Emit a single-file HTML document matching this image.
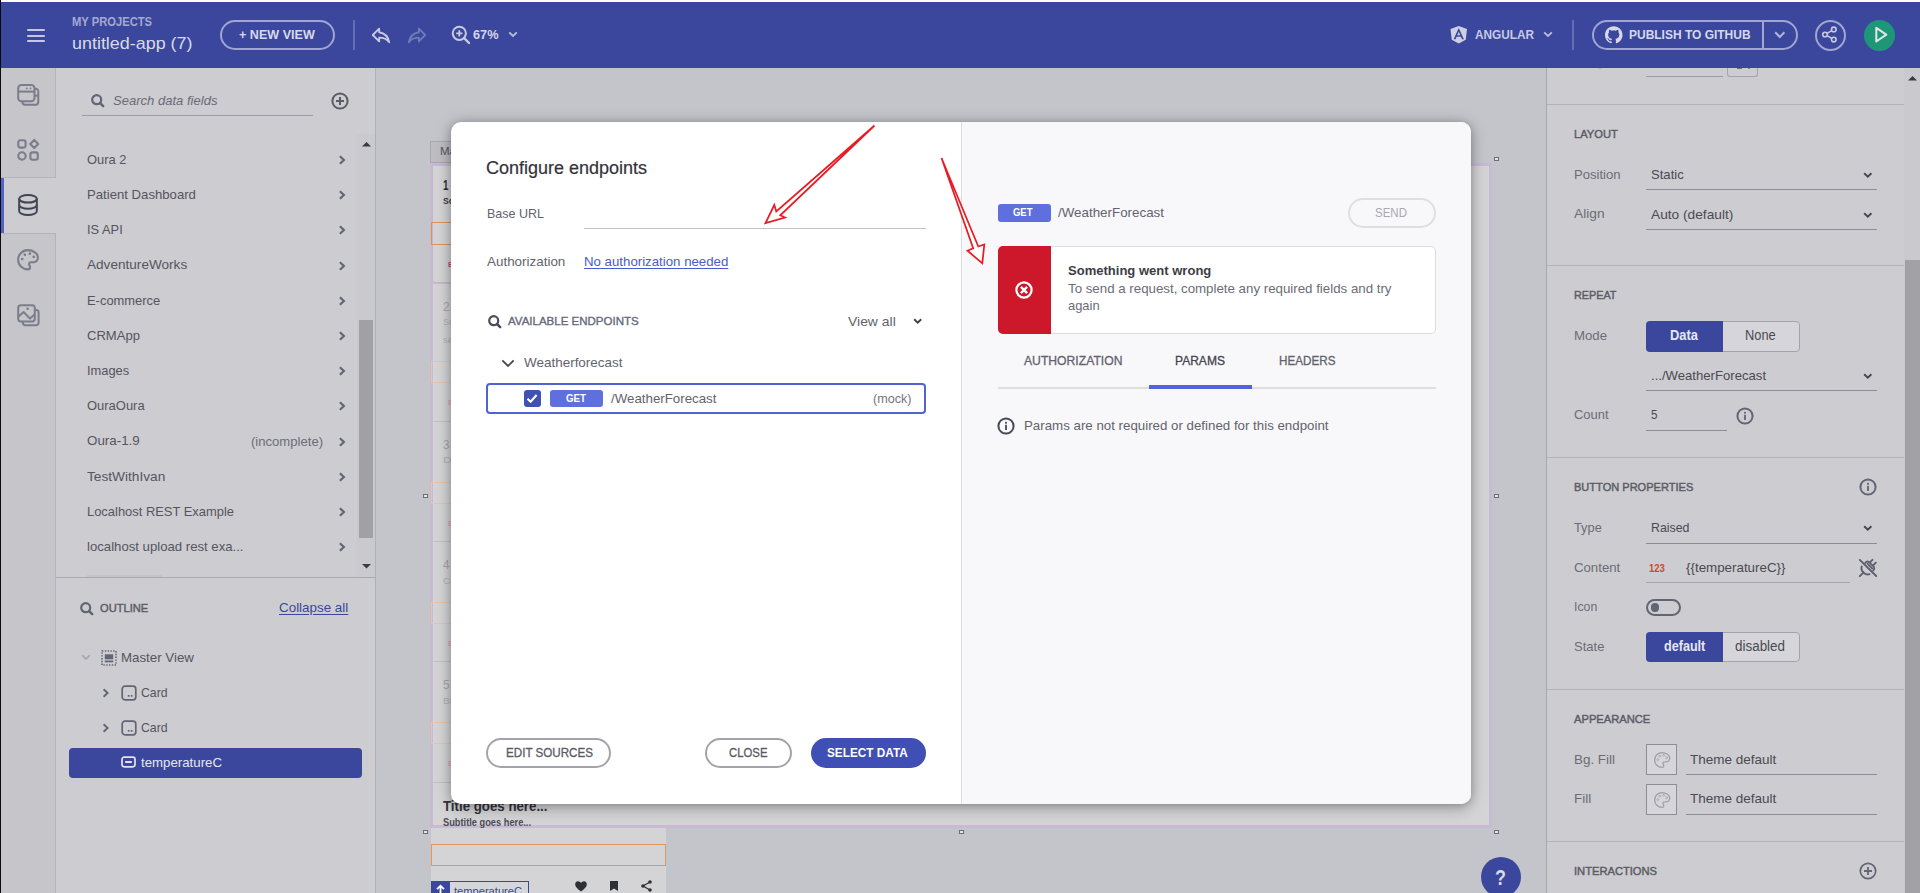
<!DOCTYPE html>
<html lang="en"><head><meta charset="utf-8"><title>App Builder - Configure endpoints</title>
<style>
html,body{margin:0;padding:0}
body{width:1920px;height:893px;overflow:hidden;position:relative;background:#c4c5cb;font-family:"Liberation Sans",sans-serif}
div,span.t,svg{position:absolute;box-sizing:border-box}
span.t{white-space:nowrap;transform-origin:0 50%;display:block}
svg{overflow:visible}
</style></head><body>
<!-- canvas -->
<div style="left:376px;top:68px;width:1171px;height:825px;background:#c4c5cb"></div>
<div style="left:431px;top:164px;width:1060px;height:662px;background:#d4d4d7"></div>
<div style="left:665px;top:166px;width:1px;height:659px;background:#dadadd"></div>
<div style="left:431px;top:163px;width:235px;height:730px;background:#d4d4d7"></div>
<div style="left:430px;top:163px;width:1062px;height:665px;border:3px solid #c9bad3"></div>
<div style="left:430px;top:141px;width:84px;height:22px;background:#bdbdc2;border:1px solid #a7a7ae"></div>
<span class="t" style="left:439.80px;top:146.49px;font-size:11px;line-height:11px;color:#55555e;transform:scaleX(1.0402);">Master View</span>
<div style="left:432px;top:164px;width:232px;height:119px;border:1px solid #c3b6cd;border-radius:3px"></div>
<span class="t" style="left:443.20px;top:177.65px;font-size:14px;line-height:14px;color:#2f2f36;font-weight:700;transform:scaleX(0.6968);">1</span>
<span class="t" style="left:442.60px;top:197.38px;font-size:9px;line-height:9px;color:#3a3a42;font-weight:700;transform:scaleX(0.9517);">Scattered clouds</span>
<div style="left:431px;top:222px;width:234px;height:23px;border:1px solid #dc9456"></div>
<span class="t" style="left:447.60px;top:261.23px;font-size:8px;line-height:8px;color:#d8486c;font-weight:700;transform:scaleX(0.8696);">B</span>
<div style="left:432px;top:283px;width:232px;height:1px;background:#c2bfc8"></div>
<span class="t" style="left:442.60px;top:299.60px;font-size:13px;line-height:13px;color:#a6a6ad;transform:scaleX(0.8966);">2</span>
<span class="t" style="left:442.60px;top:318.38px;font-size:9px;line-height:9px;color:#b2b2b8;transform:scaleX(1.0196);">Sunny</span>
<span class="t" style="left:442.60px;top:336.18px;font-size:9px;line-height:9px;color:#b2b2b8;transform:scaleX(1.0345);">second</span>
<div style="left:431px;top:361px;width:234px;height:22px;border:1px solid #e3c4ae"></div>
<span class="t" style="left:447.60px;top:399.43px;font-size:8px;line-height:8px;color:#e3a9b8;font-weight:700;transform:scaleX(0.8696);">B</span>
<div style="left:432px;top:421px;width:232px;height:1px;background:#c2bfc8"></div>
<span class="t" style="left:442.60px;top:437.70px;font-size:13px;line-height:13px;color:#a6a6ad;transform:scaleX(0.8966);">3</span>
<span class="t" style="left:442.60px;top:456.48px;font-size:9px;line-height:9px;color:#b2b2b8;transform:scaleX(1.3236);">Drizzle</span>
<div style="left:431px;top:482px;width:234px;height:22px;border:1px solid #e3c4ae"></div>
<span class="t" style="left:447.60px;top:519.73px;font-size:8px;line-height:8px;color:#e3a9b8;font-weight:700;transform:scaleX(0.8696);">B</span>
<div style="left:432px;top:541px;width:232px;height:1px;background:#c2bfc8"></div>
<span class="t" style="left:442.60px;top:557.90px;font-size:13px;line-height:13px;color:#a6a6ad;transform:scaleX(0.8966);">4</span>
<span class="t" style="left:442.60px;top:576.68px;font-size:9px;line-height:9px;color:#b2b2b8;transform:scaleX(1.1143);">Cloudy</span>
<div style="left:431px;top:602px;width:234px;height:22px;border:1px solid #e3c4ae"></div>
<span class="t" style="left:447.60px;top:639.93px;font-size:8px;line-height:8px;color:#e3a9b8;font-weight:700;transform:scaleX(0.8696);">B</span>
<div style="left:432px;top:661px;width:232px;height:1px;background:#c2bfc8"></div>
<span class="t" style="left:442.60px;top:678.10px;font-size:13px;line-height:13px;color:#a6a6ad;transform:scaleX(0.8966);">5</span>
<span class="t" style="left:442.60px;top:696.88px;font-size:9px;line-height:9px;color:#b2b2b8;transform:scaleX(1.1143);">Breezy</span>
<div style="left:431px;top:722px;width:234px;height:22px;border:1px solid #e3c4ae"></div>
<span class="t" style="left:447.60px;top:760.13px;font-size:8px;line-height:8px;color:#e3a9b8;font-weight:700;transform:scaleX(0.8696);">B</span>
<div style="left:432px;top:782px;width:232px;height:1px;background:#c2bfc8"></div>
<span class="t" style="left:442.60px;top:798.95px;font-size:14px;line-height:14px;color:#34343b;font-weight:700;transform:scaleX(0.9478);">Title goes here...</span>
<span class="t" style="left:442.60px;top:818.33px;font-size:10px;line-height:10px;color:#4c4c55;font-weight:700;transform:scaleX(0.9263);">Subtitle goes here...</span>
<div style="left:431px;top:844px;width:235px;height:22px;border:1px solid #dc9a5e"></div>
<div style="left:431px;top:881px;width:98px;height:16px;border:1px solid #3b479c;background:#d6d6da"></div>
<div style="left:431px;top:881px;width:19px;height:16px;background:#3b479c"></div>
<svg style="left:435px;top:884px;" width="11" height="10" viewBox="0 0 11 10"><path d="M5.5 9V2M2 5.2L5.5 1.7 9 5.2" fill="none" stroke="#fff" stroke-width="1.8"/></svg>
<span class="t" style="left:453.60px;top:886.53px;font-size:10px;line-height:10px;color:#3b479c;transform:scaleX(1.1125);">temperatureC</span>
<svg style="left:575px;top:881px;" width="12" height="11" viewBox="0 0 12 11"><path d="M6 10.6C1.2 6.8 0.2 5 0.2 3.2 0.2 1.5 1.5 0.3 3 0.3c1.2 0 2.3 0.7 3 1.8C6.7 1 7.8 0.3 9 0.3c1.5 0 2.8 1.2 2.8 2.9 0 1.8-1 3.6-5.8 7.4z" fill="#2f2f36"/></svg>
<svg style="left:610px;top:881px;" width="8" height="10" viewBox="0 0 8 10"><path d="M0 0h8v10l-4-2.4L0 10z" fill="#2f2f36"/></svg>
<svg style="left:641px;top:880px;" width="11" height="12" viewBox="0 0 11 12"><g fill="#2f2f36"><circle cx="9" cy="2" r="1.8"/><circle cx="9" cy="10" r="1.8"/><circle cx="2" cy="6" r="1.8"/></g><path d="M9 2L2 6l7 4" fill="none" stroke="#2f2f36" stroke-width="1.2"/></svg>
<div style="left:423px;top:493.5px;width:5px;height:4px;border:1px solid #6a6d7c;background:#e2e2e6"></div>
<div style="left:423px;top:830px;width:5px;height:4px;border:1px solid #6a6d7c;background:#e2e2e6"></div>
<div style="left:958.5px;top:830px;width:5px;height:4px;border:1px solid #6a6d7c;background:#e2e2e6"></div>
<div style="left:1494px;top:830px;width:5px;height:4px;border:1px solid #6a6d7c;background:#e2e2e6"></div>
<div style="left:1494px;top:493.5px;width:5px;height:4px;border:1px solid #6a6d7c;background:#e2e2e6"></div>
<div style="left:1494px;top:157px;width:5px;height:4px;border:1px solid #6a6d7c;background:#e2e2e6"></div>
<div style="left:1481px;top:857px;width:40px;height:40px;background:#3b479c;border-radius:50%"></div>
<span class="t" style="left:1494.60px;top:867.38px;font-size:22px;line-height:22px;color:#d9dbea;font-weight:700;transform:scaleX(0.8148);">?</span>
<!-- header -->
<div style="left:0px;top:0px;width:1920px;height:2px;background:#fbfbfc"></div>
<div style="left:0px;top:2px;width:1920px;height:66px;background:#3b479c"></div>
<div style="left:27px;top:29px;width:18px;height:2px;background:#c5c8e0;border-radius:1px"></div>
<div style="left:27px;top:34.5px;width:18px;height:2px;background:#c5c8e0;border-radius:1px"></div>
<div style="left:27px;top:40px;width:18px;height:2px;background:#c5c8e0;border-radius:1px"></div>
<span class="t" style="left:71.60px;top:16.14px;font-size:12px;line-height:12px;color:#a3a9d2;font-weight:700;transform:scaleX(0.9329);">MY PROJECTS</span>
<span class="t" style="left:71.60px;top:34.91px;font-size:17px;line-height:17px;color:#d9dae6;transform:scaleX(1.0536);">untitled-app (7)</span>
<div style="left:220px;top:19.6px;width:115px;height:30.6px;border:2px solid #a0a6d1;border-radius:16px"></div>
<span class="t" style="left:239.10px;top:28.30px;font-size:13px;line-height:13px;color:#d7d9ea;font-weight:700;transform:scaleX(0.9682);">+ NEW VIEW</span>
<div style="left:353px;top:20px;width:2px;height:30px;background:#646eb4"></div>
<svg style="left:369.5px;top:23.5px;" width="22" height="22" viewBox="0 0 24 24"><path d="M10 9V5l-7 7 7 7v-4.1c5 0 8.5 1.6 11 5.1-1-5-4-10-11-11z" fill="none" stroke="#c8cae2" stroke-width="2" stroke-linejoin="round"/></svg>
<svg style="left:405.5px;top:23.5px;" width="22" height="22" viewBox="0 0 24 24"><g transform="translate(24,0) scale(-1,1)"><path d="M10 9V5l-7 7 7 7v-4.1c5 0 8.5 1.6 11 5.1-1-5-4-10-11-11z" fill="none" stroke="#6f7ab9" stroke-width="2" stroke-linejoin="round"/></g></svg>
<svg style="left:451px;top:25px;" width="20" height="20" viewBox="0 0 20 20"><circle cx="8.3" cy="8.3" r="6.6" fill="none" stroke="#c8cae2" stroke-width="2"/><path d="M13.2 13.2L18 18" stroke="#c8cae2" stroke-width="2.4" stroke-linecap="round"/><path d="M8.3 5.2v6.2M5.2 8.3h6.2" stroke="#c8cae2" stroke-width="1.8"/></svg>
<span class="t" style="left:473.40px;top:29.14px;font-size:12px;line-height:12px;color:#d3d5e8;font-weight:700;transform:scaleX(1.0625);">67%</span>
<svg style="left:508px;top:31px;" width="10" height="7" viewBox="0 0 10 7"><path d="M1.2 1.3L5 5l3.8-3.7" fill="none" stroke="#b9bdde" stroke-width="1.8"/></svg>
<svg style="left:1450px;top:26px;" width="17.5" height="17.5" viewBox="0 0 24 24"><path d="M9.931 12.645h4.138l-2.07-4.908m0-7.737L.68 3.982l1.726 14.771L12 24l9.596-5.242L23.32 3.984 11.999.001zm7.064 18.31h-2.638l-1.422-3.503H8.996l-1.422 3.504h-2.64L12 2.65z" fill="#cdcfe3"/></svg>
<span class="t" style="left:1474.60px;top:29.14px;font-size:12px;line-height:12px;color:#c7cae3;font-weight:700;transform:scaleX(0.9833);">ANGULAR</span>
<svg style="left:1543px;top:31px;" width="10" height="7" viewBox="0 0 10 7"><path d="M1.2 1.3L5 5l3.8-3.7" fill="none" stroke="#b9bdde" stroke-width="1.8"/></svg>
<div style="left:1572px;top:20px;width:2px;height:30px;background:#646eb4"></div>
<div style="left:1592px;top:19.6px;width:206px;height:30.6px;border:2px solid #a0a6d1;border-radius:16px"></div>
<div style="left:1762px;top:21px;width:2px;height:28px;background:#a0a6d1"></div>
<svg style="left:1605px;top:26.3px;" width="17.5" height="17.5" viewBox="0 0 24 24"><path d="M12 .297c-6.63 0-12 5.373-12 12 0 5.303 3.438 9.8 8.205 11.385.6.113.82-.258.82-.577 0-.285-.01-1.04-.015-2.04-3.338.724-4.042-1.61-4.042-1.61C4.422 18.07 3.633 17.7 3.633 17.7c-1.087-.744.084-.729.084-.729 1.205.084 1.838 1.236 1.838 1.236 1.07 1.835 2.809 1.305 3.495.998.108-.776.417-1.305.76-1.605-2.665-.3-5.466-1.332-5.466-5.93 0-1.31.465-2.38 1.235-3.22-.135-.303-.54-1.523.105-3.176 0 0 1.005-.322 3.3 1.23.96-.267 1.98-.399 3-.405 1.02.006 2.04.138 3 .405 2.28-1.552 3.285-1.23 3.285-1.23.645 1.653.24 2.873.12 3.176.765.84 1.23 1.91 1.23 3.22 0 4.61-2.805 5.625-5.475 5.92.42.36.81 1.096.81 2.22 0 1.606-.015 2.896-.015 3.286 0 .315.21.69.825.57C20.565 22.092 24 17.592 24 12.297c0-6.627-5.373-12-12-12" fill="#d7d9ea"/></svg>
<span class="t" style="left:1629.10px;top:29.14px;font-size:12px;line-height:12px;color:#d7d9ea;font-weight:700;transform:scaleX(0.9979);">PUBLISH TO GITHUB</span>
<svg style="left:1774px;top:30.8px;" width="12" height="8" viewBox="0 0 12 8"><path d="M1.200 1.300L5.800 5.900l4.600-4.600" fill="none" stroke="#aeb3da" stroke-width="2.100"/></svg>
<div style="left:1815px;top:19.6px;width:31px;height:31px;border:2px solid #a0a6d1;border-radius:50%"></div>
<svg style="left:1821.2px;top:26px;" width="17" height="17" viewBox="0 0 17 17"><g fill="none" stroke="#c8cae2" stroke-width="1.6"><circle cx="12.8" cy="3.4" r="2.3"/><circle cx="12.8" cy="13.6" r="2.3"/><circle cx="4" cy="8.5" r="2.3"/><path d="M6 7.4l4.8-2.8M6 9.6l4.8 2.8"/></g></svg>
<div style="left:1864px;top:20px;width:31px;height:31px;background:#1d9778;border-radius:50%"></div>
<svg style="left:1873.5px;top:26px;" width="14" height="18" viewBox="0 0 14 18"><path d="M2.300 1.900v13.600L12.300 8.700z" fill="none" stroke="#e0e6e6" stroke-width="2.100" stroke-linejoin="round"/></svg>
<!-- left -->
<div style="left:0px;top:68px;width:56px;height:825px;background:#c5c5ca"></div>
<div style="left:0px;top:68px;width:56px;height:110px;background:#c5c5ca;border-right:1px solid #b4b4bb;border-bottom:1px solid #b4b4bb"></div>
<div style="left:0px;top:178px;width:56px;height:55px;background:#cdccd1"></div>
<div style="left:1px;top:178px;width:3px;height:55px;background:#5261c6"></div>
<div style="left:0px;top:233px;width:56px;height:660px;background:#c5c5ca;border-right:1px solid #b4b4bb;border-top:1px solid #b4b4bb"></div>
<div style="left:0px;top:0px;width:1px;height:893px;background:#0b0b0b"></div>
<svg style="left:17px;top:84px;" width="22" height="22" viewBox="0 0 22 22"><g fill="none" stroke="#7b7e8a" stroke-width="2"><path d="M17.500 4.800h1.200a2.600 2.600 0 0 1 2.600 2.600v10.700a2.600 2.600 0 0 1-2.600 2.600H8a2.600 2.600 0 0 1-2.600-2.600v-0.900"/><path d="M17.500 11.700h3.500"/><rect x="1.200" y="1.100" width="16.300" height="16.200" rx="3.200"/><path d="M1.200 7.600h16.300"/></g><circle cx="9.800" cy="4.400" r=".9" fill="#7b7e8a"/><circle cx="13.500" cy="4.400" r=".9" fill="#7b7e8a"/></svg>
<svg style="left:17px;top:139px;" width="23" height="22" viewBox="0 0 23 22"><g fill="none" stroke="#7b7e8a" stroke-width="2.100" stroke-linejoin="round"><rect x="1.300" y="1.300" width="7.300" height="7.300" rx="2"/><rect x="13.400" y="13.400" width="7.400" height="7.300" rx="2"/><circle cx="4.950" cy="17" r="3.700"/><path d="M17.200 0.900l4 4.100-4 4.100-4-4.100z"/></g></svg>
<svg style="left:18px;top:194px;" width="20" height="22" viewBox="0 0 20 22"><g fill="none" stroke="#414452" stroke-width="2"><ellipse cx="10" cy="4.8" rx="8.8" ry="3.8"/><path d="M1.2 4.8v12.4c0 2.1 3.9 3.8 8.8 3.8s8.8-1.7 8.8-3.8V4.8"/><path d="M1.2 11c0 2.1 3.9 3.8 8.8 3.8s8.8-1.7 8.8-3.8"/></g></svg>
<svg style="left:16.4px;top:248.2px;" width="23.5" height="23.5" viewBox="0 0 22 22"><path d="M12 3a9 9 0 0 0 0 18c1.4 0 2.2-.9 2.2-2 0-.6-.2-1-.5-1.400-.3-.4-.5-.8-.5-1.300 0-1.100.9-1.900 2-1.900H17a4.500 4.500 0 0 0 4.500-4.500C21.500 6.100 17.200 3 12 3z" fill="none" stroke="#7b7e8a" stroke-width="1.950" transform="translate(-1,-1)"/><g fill="#7b7e8a"><circle cx="5.800" cy="10.300" r="1.250"/><circle cx="8.300" cy="6.300" r="1.250"/><circle cx="13" cy="5.300" r="1.250"/><circle cx="16.600" cy="8.300" r="1.250"/></g></svg>
<svg style="left:17px;top:304px;" width="22" height="22" viewBox="0 0 22 22"><g fill="none" stroke="#7b7e8a" stroke-width="2" stroke-linejoin="round"><path d="M18 6h1.200a2.400 2.400 0 0 1 2.400 2.400v10.400a2.400 2.400 0 0 1-2.400 2.400H8.200a2.400 2.400 0 0 1-2.400-2.400v-1.300"/><rect x="1.200" y="1.200" width="16.600" height="16.200" rx="2.600"/><path d="M1.600 12.600l5-4.600 6.400 6.600 4.600-4.200"/></g><circle cx="10.600" cy="4.800" r="1.300" fill="#7b7e8a"/></svg>
<div style="left:56px;top:68px;width:320px;height:825px;background:#cdccd1;border-right:1px solid #b0b0b8"></div>
<svg style="left:91px;top:94.3px;" width="14" height="14" viewBox="0 0 14 14"><circle cx="5.700" cy="5.700" r="4.500" fill="none" stroke="#626574" stroke-width="2.200"/><path d="M9 9L12.200 12.100" stroke="#626574" stroke-width="2.500" stroke-linecap="round"/></svg>
<span class="t" style="left:113.40px;top:93.80px;font-size:13px;line-height:13px;color:#6a6a74;font-style:italic;transform:scaleX(1.0036);">Search data fields</span>
<div style="left:82px;top:115px;width:231px;height:1px;background:#9b9ba3"></div>
<svg style="left:330.5px;top:92.3px;" width="18" height="18" viewBox="0 0 18 18"><circle cx="9" cy="9" r="7.600" fill="none" stroke="#5b5c67" stroke-width="2"/><path d="M9 5v8M5 9h8" stroke="#5b5c67" stroke-width="2"/></svg>
<div style="left:357px;top:134px;width:18px;height:443px;background:#cacace"></div>
<div style="left:359px;top:320px;width:14px;height:218px;background:#a1a1a5"></div>
<svg style="left:361.5px;top:141.8px;" width="9" height="5" viewBox="0 0 9 5"><path d="M0 4.500L4.500 0 9 4.500z" fill="#3a3a42"/></svg>
<svg style="left:361.5px;top:563.5px;" width="9" height="5" viewBox="0 0 9 5"><path d="M0 0h9L4.500 4.500z" fill="#3a3a42"/></svg>
<span class="t" style="left:86.90px;top:152.80px;font-size:13px;line-height:13px;color:#55555e;transform:scaleX(0.9937);">Oura 2</span>
<svg style="left:337.5px;top:155.0px;" width="8" height="10" viewBox="0 0 8 10"><path d="M1.900 1.200L5.900 5 1.900 8.800" fill="none" stroke="#626574" stroke-width="2.200"/></svg>
<span class="t" style="left:86.90px;top:188.00px;font-size:13px;line-height:13px;color:#55555e;transform:scaleX(1.0116);">Patient Dashboard</span>
<svg style="left:337.5px;top:190.2px;" width="8" height="10" viewBox="0 0 8 10"><path d="M1.900 1.200L5.900 5 1.900 8.800" fill="none" stroke="#626574" stroke-width="2.200"/></svg>
<span class="t" style="left:86.90px;top:223.20px;font-size:13px;line-height:13px;color:#55555e;transform:scaleX(0.9882);">IS API</span>
<svg style="left:337.5px;top:225.4px;" width="8" height="10" viewBox="0 0 8 10"><path d="M1.900 1.200L5.900 5 1.900 8.800" fill="none" stroke="#626574" stroke-width="2.200"/></svg>
<span class="t" style="left:86.90px;top:258.40px;font-size:13px;line-height:13px;color:#55555e;transform:scaleX(1.0451);">AdventureWorks</span>
<svg style="left:337.5px;top:260.6px;" width="8" height="10" viewBox="0 0 8 10"><path d="M1.900 1.200L5.900 5 1.900 8.800" fill="none" stroke="#626574" stroke-width="2.200"/></svg>
<span class="t" style="left:86.90px;top:293.60px;font-size:13px;line-height:13px;color:#55555e;transform:scaleX(0.9942);">E-commerce</span>
<svg style="left:337.5px;top:295.8px;" width="8" height="10" viewBox="0 0 8 10"><path d="M1.900 1.200L5.900 5 1.900 8.800" fill="none" stroke="#626574" stroke-width="2.200"/></svg>
<span class="t" style="left:86.90px;top:328.80px;font-size:13px;line-height:13px;color:#55555e;transform:scaleX(1.0047);">CRMApp</span>
<svg style="left:337.5px;top:331.0px;" width="8" height="10" viewBox="0 0 8 10"><path d="M1.900 1.200L5.900 5 1.900 8.800" fill="none" stroke="#626574" stroke-width="2.200"/></svg>
<span class="t" style="left:86.90px;top:364.00px;font-size:13px;line-height:13px;color:#55555e;transform:scaleX(0.9900);">Images</span>
<svg style="left:337.5px;top:366.2px;" width="8" height="10" viewBox="0 0 8 10"><path d="M1.900 1.200L5.900 5 1.900 8.800" fill="none" stroke="#626574" stroke-width="2.200"/></svg>
<span class="t" style="left:86.90px;top:399.20px;font-size:13px;line-height:13px;color:#55555e;transform:scaleX(0.9970);">OuraOura</span>
<svg style="left:337.5px;top:401.40000000000003px;" width="8" height="10" viewBox="0 0 8 10"><path d="M1.900 1.200L5.900 5 1.900 8.800" fill="none" stroke="#626574" stroke-width="2.200"/></svg>
<span class="t" style="left:86.90px;top:434.40px;font-size:13px;line-height:13px;color:#55555e;transform:scaleX(1.0283);">Oura-1.9</span>
<svg style="left:337.5px;top:436.6px;" width="8" height="10" viewBox="0 0 8 10"><path d="M1.900 1.200L5.900 5 1.900 8.800" fill="none" stroke="#626574" stroke-width="2.200"/></svg>
<span class="t" style="left:86.90px;top:469.60px;font-size:13px;line-height:13px;color:#55555e;transform:scaleX(1.0514);">TestWithIvan</span>
<svg style="left:337.5px;top:471.8px;" width="8" height="10" viewBox="0 0 8 10"><path d="M1.900 1.200L5.900 5 1.900 8.800" fill="none" stroke="#626574" stroke-width="2.200"/></svg>
<span class="t" style="left:86.90px;top:504.80px;font-size:13px;line-height:13px;color:#55555e;transform:scaleX(0.9941);">Localhost REST Example</span>
<svg style="left:337.5px;top:506.99999999999994px;" width="8" height="10" viewBox="0 0 8 10"><path d="M1.900 1.200L5.900 5 1.900 8.800" fill="none" stroke="#626574" stroke-width="2.200"/></svg>
<span class="t" style="left:86.90px;top:540.00px;font-size:13px;line-height:13px;color:#55555e;transform:scaleX(1.0121);">localhost upload rest exa...</span>
<svg style="left:337.5px;top:542.2px;" width="8" height="10" viewBox="0 0 8 10"><path d="M1.900 1.200L5.900 5 1.900 8.800" fill="none" stroke="#626574" stroke-width="2.200"/></svg>
<span class="t" style="left:251.10px;top:435.00px;font-size:13px;line-height:13px;color:#6c6c75;transform:scaleX(1.0070);">(incomplete)</span>
<div style="left:87px;top:574.5px;width:75px;height:2px;background:#c3c3c8"></div>
<div style="left:56px;top:577px;width:320px;height:1px;background:#a9a9b0"></div>
<svg style="left:80px;top:602.3px;" width="14" height="14" viewBox="0 0 14 14"><circle cx="5.700" cy="5.700" r="4.500" fill="none" stroke="#626574" stroke-width="2.200"/><path d="M9 9L12.200 12.100" stroke="#626574" stroke-width="2.500" stroke-linecap="round"/></svg>
<span class="t" style="left:100.10px;top:602.57px;font-size:11.5px;line-height:11.5px;color:#5c5c66;transform:scaleX(0.9684);-webkit-text-stroke:.45px #5c5c66;">OUTLINE</span>
<span class="t" style="left:278.60px;top:601.00px;font-size:13px;line-height:13px;color:#3b479c;transform:scaleX(1.0305);text-decoration:underline;text-underline-offset:1.500px;">Collapse all</span>
<svg style="left:81px;top:654px;" width="10" height="7" viewBox="0 0 10 7"><path d="M1.200 1.200L5 5l3.800-3.800" fill="none" stroke="#a6a6ae" stroke-width="1.700"/></svg>
<svg style="left:100.5px;top:650px;" width="16" height="16" viewBox="0 0 16 16"><rect x="1" y="1" width="14" height="14" fill="none" stroke="#626574" stroke-width="1.600" stroke-dasharray="1.400 1.400"/><rect x="3.800" y="4.300" width="8.400" height="5" fill="#626574"/><rect x="3.800" y="10.500" width="8.400" height="1.800" fill="#626574"/></svg>
<span class="t" style="left:121.10px;top:651.00px;font-size:13px;line-height:13px;color:#55555e;transform:scaleX(1.0228);">Master View</span>
<svg style="left:102px;top:687.8px;" width="8" height="10" viewBox="0 0 8 10"><path d="M1.600 1.200L5.600 5 1.600 8.800" fill="none" stroke="#626574" stroke-width="1.900"/></svg>
<svg style="left:121px;top:685px;" width="16" height="16" viewBox="0 0 16 16"><rect x="1.200" y="1.200" width="13.600" height="13.600" rx="2.800" fill="none" stroke="#626574" stroke-width="1.700"/><rect x="6.800" y="10" width="1.700" height="1.700" fill="#626574"/><rect x="9.800" y="10" width="1.700" height="1.700" fill="#626574"/></svg>
<span class="t" style="left:141.10px;top:686.00px;font-size:13px;line-height:13px;color:#55555e;transform:scaleX(0.9422);">Card</span>
<svg style="left:102px;top:722.8px;" width="8" height="10" viewBox="0 0 8 10"><path d="M1.600 1.200L5.600 5 1.600 8.800" fill="none" stroke="#626574" stroke-width="1.900"/></svg>
<svg style="left:121px;top:720px;" width="16" height="16" viewBox="0 0 16 16"><rect x="1.200" y="1.200" width="13.600" height="13.600" rx="2.800" fill="none" stroke="#626574" stroke-width="1.700"/><rect x="6.800" y="10" width="1.700" height="1.700" fill="#626574"/><rect x="9.800" y="10" width="1.700" height="1.700" fill="#626574"/></svg>
<span class="t" style="left:141.10px;top:721.00px;font-size:13px;line-height:13px;color:#55555e;transform:scaleX(0.9422);">Card</span>
<div style="left:69px;top:748px;width:293px;height:30px;background:#3b479c;border-radius:4px"></div>
<svg style="left:121px;top:756px;" width="15" height="12" viewBox="0 0 15 12"><rect x="1" y="1.200" width="13" height="9.600" rx="2.200" fill="none" stroke="#e3e4f0" stroke-width="1.700"/><rect x="4.200" y="5" width="6.600" height="2" fill="#e3e4f0"/></svg>
<span class="t" style="left:140.60px;top:756.00px;font-size:13px;line-height:13px;color:#e6e7f2;transform:scaleX(1.0189);">temperatureC</span>
<!-- right -->
<div style="left:1546px;top:68px;width:374px;height:825px;background:#cdccd1;border-left:1px solid #a6a6ae"></div>
<div style="left:1904px;top:68px;width:16px;height:825px;background:#cacace"></div>
<div style="left:1905px;top:260px;width:15px;height:633px;background:#a1a1a6"></div>
<svg style="left:1908px;top:75.5px;" width="9" height="5" viewBox="0 0 9 5"><path d="M0 4.500L4.500 0 9 4.500z" fill="#3a3a42"/></svg>
<div style="left:1646px;top:76px;width:77px;height:1px;background:#9b9ba3"></div>
<div style="left:1727px;top:68px;width:31px;height:9px;border:1px solid #a3a3ab;border-top:0;border-radius:0 0 3px 3px"></div>
<div style="left:1737px;top:68px;width:5px;height:1px;background:#6e6f7a"></div>
<div style="left:1748px;top:68px;width:2px;height:1px;background:#85868f"></div>
<div style="left:1598px;top:68px;width:4px;height:1px;background:#bcb7ae"></div>
<div style="left:1547px;top:104px;width:357px;height:1px;background:#b1b1b8"></div>
<div style="left:1547px;top:265px;width:357px;height:1px;background:#b1b1b8"></div>
<div style="left:1547px;top:457px;width:357px;height:1px;background:#b1b1b8"></div>
<div style="left:1547px;top:689px;width:357px;height:1px;background:#b1b1b8"></div>
<div style="left:1547px;top:841px;width:357px;height:1px;background:#b1b1b8"></div>
<span class="t" style="left:1573.60px;top:129.17px;font-size:11.5px;line-height:11.5px;color:#5c5c66;transform:scaleX(0.9684);-webkit-text-stroke:.45px #5c5c66;">LAYOUT</span>
<span class="t" style="left:1573.60px;top:168.00px;font-size:13px;line-height:13px;color:#6c6c75;transform:scaleX(1.0054);">Position</span>
<span class="t" style="left:1650.60px;top:168.00px;font-size:13px;line-height:13px;color:#4a4a53;transform:scaleX(1.0062);">Static</span>
<svg style="left:1863px;top:172px;" width="10" height="7" viewBox="0 0 10 7"><path d="M1.200 1.200L4.800 4.700 8.400 1.200" fill="none" stroke="#46464f" stroke-width="1.900"/></svg>
<div style="left:1646px;top:189px;width:231px;height:1px;background:#8d8d96"></div>
<span class="t" style="left:1573.60px;top:207.00px;font-size:13px;line-height:13px;color:#6c6c75;transform:scaleX(1.0563);">Align</span>
<span class="t" style="left:1650.60px;top:208.00px;font-size:13px;line-height:13px;color:#4a4a53;transform:scaleX(1.0551);">Auto (default)</span>
<svg style="left:1863px;top:212px;" width="10" height="7" viewBox="0 0 10 7"><path d="M1.200 1.200L4.800 4.700 8.400 1.200" fill="none" stroke="#46464f" stroke-width="1.900"/></svg>
<div style="left:1646px;top:229px;width:231px;height:1px;background:#8d8d96"></div>
<span class="t" style="left:1573.60px;top:290.07px;font-size:11.5px;line-height:11.5px;color:#5c5c66;transform:scaleX(0.9396);-webkit-text-stroke:.45px #5c5c66;">REPEAT</span>
<span class="t" style="left:1573.60px;top:329.00px;font-size:13px;line-height:13px;color:#6c6c75;transform:scaleX(1.0154);">Mode</span>
<div style="left:1646px;top:321px;width:154px;height:31px;border:1px solid #a3a3ab;border-radius:4px;background:#d6d6da"></div>
<div style="left:1646px;top:321px;width:77px;height:31px;background:#3b479c;border-radius:4px 0 0 4px"></div>
<span class="t" style="left:1670.30px;top:328.15px;font-size:14px;line-height:14px;color:#e6e7f2;font-weight:700;transform:scaleX(0.9185);">Data</span>
<span class="t" style="left:1744.90px;top:328.15px;font-size:14px;line-height:14px;color:#4a4a53;transform:scaleX(0.9164);">None</span>
<span class="t" style="left:1650.60px;top:368.80px;font-size:13px;line-height:13px;color:#4a4a53;transform:scaleX(1.0099);">.../WeatherForecast</span>
<svg style="left:1863px;top:373px;" width="10" height="7" viewBox="0 0 10 7"><path d="M1.200 1.200L4.800 4.700 8.400 1.200" fill="none" stroke="#46464f" stroke-width="1.900"/></svg>
<div style="left:1646px;top:390px;width:231px;height:1px;background:#8d8d96"></div>
<span class="t" style="left:1573.60px;top:408.00px;font-size:13px;line-height:13px;color:#6c6c75;transform:scaleX(0.9957);">Count</span>
<span class="t" style="left:1651.10px;top:408.00px;font-size:13px;line-height:13px;color:#4a4a53;transform:scaleX(0.8966);">5</span>
<div style="left:1646px;top:430px;width:81px;height:1px;background:#8d8d96"></div>
<svg style="left:1736px;top:407px;" width="18" height="18" viewBox="0 0 18 18"><circle cx="9" cy="9" r="7.600" fill="none" stroke="#626574" stroke-width="2"/><rect x="8.100" y="7.800" width="1.800" height="5.200" fill="#626574"/><rect x="8.100" y="4.800" width="1.800" height="1.900" fill="#626574"/></svg>
<span class="t" style="left:1573.60px;top:482.27px;font-size:11.5px;line-height:11.5px;color:#5c5c66;transform:scaleX(0.9603);-webkit-text-stroke:.45px #5c5c66;">BUTTON PROPERTIES</span>
<svg style="left:1859px;top:478px;" width="18" height="18" viewBox="0 0 18 18"><circle cx="9" cy="9" r="7.600" fill="none" stroke="#626574" stroke-width="2"/><rect x="8.100" y="7.800" width="1.800" height="5.200" fill="#626574"/><rect x="8.100" y="4.800" width="1.800" height="1.900" fill="#626574"/></svg>
<span class="t" style="left:1573.60px;top:520.80px;font-size:13px;line-height:13px;color:#6c6c75;transform:scaleX(0.9849);">Type</span>
<span class="t" style="left:1650.60px;top:520.80px;font-size:13px;line-height:13px;color:#4a4a53;transform:scaleX(0.9506);">Raised</span>
<svg style="left:1863px;top:525px;" width="10" height="7" viewBox="0 0 10 7"><path d="M1.200 1.200L4.800 4.700 8.400 1.200" fill="none" stroke="#46464f" stroke-width="1.900"/></svg>
<div style="left:1646px;top:543px;width:231px;height:1px;background:#8d8d96"></div>
<span class="t" style="left:1573.60px;top:561.20px;font-size:13px;line-height:13px;color:#6c6c75;transform:scaleX(1.0154);">Content</span>
<span class="t" style="left:1649.20px;top:563.74px;font-size:10px;line-height:10px;color:#d0492b;font-weight:700;transform:scaleX(0.9552);">123</span>
<span class="t" style="left:1685.60px;top:561.20px;font-size:13px;line-height:13px;color:#4a4a53;transform:scaleX(1.0271);">{{temperatureC}}</span>
<div style="left:1646px;top:582px;width:204px;height:1px;background:#a5a5ad"></div>
<svg style="left:1858.9px;top:559px;" width="18" height="18" viewBox="0 0 18 18"><g fill="none" stroke="#5d606c" stroke-width="1.900" stroke-linecap="round" stroke-linejoin="round"><path d="M0.800 0.900L17.200 17"/><path d="M0.800 17.200L4.400 13.600"/><path d="M2.700 7.500Q1.600 11 4.600 13.600Q7.400 16.300 10.600 15.200"/><path d="M6.300 3.900Q7.800 2 9.800 2.800L14.900 7.900Q15.900 9.900 14.200 11.600"/><path d="M8.600 4.900L13.100 9.400"/><path d="M11.200 3.200L13.400 0.800M14.300 6.200L16.800 3.700"/></g></svg>
<span class="t" style="left:1573.60px;top:600.00px;font-size:13px;line-height:13px;color:#6c6c75;transform:scaleX(0.9462);">Icon</span>
<div style="left:1646px;top:599px;width:35px;height:17px;border:2px solid #626574;border-radius:9px"></div>
<div style="left:1650.5px;top:603.2px;width:8.6px;height:8.6px;background:#626574;border-radius:50%"></div>
<span class="t" style="left:1573.60px;top:640.20px;font-size:13px;line-height:13px;color:#6c6c75;transform:scaleX(1.0008);">State</span>
<div style="left:1646px;top:632px;width:154px;height:30px;border:1px solid #a3a3ab;border-radius:4px;background:#d6d6da"></div>
<div style="left:1646px;top:632px;width:77px;height:30px;background:#3b479c;border-radius:4px 0 0 4px"></div>
<span class="t" style="left:1663.60px;top:639.15px;font-size:14px;line-height:14px;color:#e6e7f2;font-weight:700;transform:scaleX(0.9003);">default</span>
<span class="t" style="left:1735.10px;top:639.15px;font-size:14px;line-height:14px;color:#4a4a53;transform:scaleX(0.9592);">disabled</span>
<span class="t" style="left:1573.60px;top:714.07px;font-size:11.5px;line-height:11.5px;color:#5c5c66;transform:scaleX(0.9704);-webkit-text-stroke:.45px #5c5c66;">APPEARANCE</span>
<span class="t" style="left:1573.60px;top:753.00px;font-size:13px;line-height:13px;color:#6c6c75;transform:scaleX(1.0314);">Bg. Fill</span>
<div style="left:1646px;top:744px;width:31px;height:31px;border:1px solid #8d8d96;background:#d6d6da"></div>
<svg style="left:1652.5px;top:750.5px;" width="18" height="18" viewBox="0 0 22 22"><path d="M12 3a9 9 0 0 0 0 18c1.4 0 2.2-.9 2.2-2 0-.6-.2-1-.5-1.400-.3-.4-.5-.8-.5-1.300 0-1.100.9-1.900 2-1.900H17a4.500 4.500 0 0 0 4.500-4.500C21.500 6.100 17.200 3 12 3z" fill="none" stroke="#a0a0a8" stroke-width="1.600" transform="translate(-1,-1)"/><g fill="none" stroke="#a0a0a8" stroke-width="1"><circle cx="5.800" cy="10.500" r="1.100"/><circle cx="8.300" cy="6.400" r="1.100"/><circle cx="13" cy="5.300" r="1.100"/><circle cx="16.800" cy="8.200" r="1.100"/></g></svg>
<span class="t" style="left:1689.60px;top:753.00px;font-size:13px;line-height:13px;color:#4a4a53;transform:scaleX(1.0370);">Theme default</span>
<div style="left:1686px;top:774px;width:191px;height:1px;background:#8d8d96"></div>
<span class="t" style="left:1573.60px;top:791.80px;font-size:13px;line-height:13px;color:#6c6c75;transform:scaleX(1.0466);">Fill</span>
<div style="left:1646px;top:784px;width:31px;height:31px;border:1px solid #8d8d96;background:#d6d6da"></div>
<svg style="left:1652.5px;top:790.5px;" width="18" height="18" viewBox="0 0 22 22"><path d="M12 3a9 9 0 0 0 0 18c1.4 0 2.2-.9 2.2-2 0-.6-.2-1-.5-1.400-.3-.4-.5-.8-.5-1.300 0-1.100.9-1.900 2-1.900H17a4.500 4.500 0 0 0 4.500-4.500C21.500 6.100 17.200 3 12 3z" fill="none" stroke="#a0a0a8" stroke-width="1.600" transform="translate(-1,-1)"/><g fill="none" stroke="#a0a0a8" stroke-width="1"><circle cx="5.800" cy="10.500" r="1.100"/><circle cx="8.300" cy="6.400" r="1.100"/><circle cx="13" cy="5.300" r="1.100"/><circle cx="16.800" cy="8.200" r="1.100"/></g></svg>
<span class="t" style="left:1689.60px;top:791.80px;font-size:13px;line-height:13px;color:#4a4a53;transform:scaleX(1.0370);">Theme default</span>
<div style="left:1686px;top:814px;width:191px;height:1px;background:#8d8d96"></div>
<span class="t" style="left:1573.60px;top:865.97px;font-size:11.5px;line-height:11.5px;color:#5c5c66;transform:scaleX(0.9693);-webkit-text-stroke:.45px #5c5c66;">INTERACTIONS</span>
<svg style="left:1859px;top:862px;" width="18" height="18" viewBox="0 0 18 18"><circle cx="9" cy="9" r="7.700" fill="none" stroke="#626574" stroke-width="1.700"/><path d="M9 5v8M5 9h8" stroke="#626574" stroke-width="1.800"/></svg>
<!-- modal -->
<div style="left:451px;top:122px;width:1020px;height:682px;background:#fff;border-radius:10px;box-shadow:0 1px 8px 0 rgba(0,0,0,.22),0 2px 18px 0 rgba(0,0,0,.18),0 6px 14px 0 rgba(0,0,0,.08)"></div>
<div style="left:961px;top:122px;width:510px;height:682px;background:#f8f8fa;border-radius:0 10px 10px 0;border-left:1px solid #dcdce1"></div>
<span class="t" style="left:486.40px;top:160.49px;font-size:17.5px;line-height:17.5px;color:#33333a;transform:scaleX(1.0279);-webkit-text-stroke:.2px #33333a;">Configure endpoints</span>
<span class="t" style="left:486.90px;top:207.30px;font-size:13px;line-height:13px;color:#63636d;transform:scaleX(0.9620);">Base URL</span>
<div style="left:583.5px;top:228px;width:342px;height:1px;background:#c3c3c9"></div>
<span class="t" style="left:486.60px;top:255.30px;font-size:13px;line-height:13px;color:#63636d;transform:scaleX(1.0320);">Authorization</span>
<span class="t" style="left:583.60px;top:255.30px;font-size:13px;line-height:13px;color:#4a5ccc;transform:scaleX(1.0189);text-decoration:underline;text-underline-offset:1.5px;">No authorization needed</span>
<svg style="left:487.8px;top:315.3px;" width="14" height="14" viewBox="0 0 14 14"><circle cx="5.700" cy="5.700" r="4.500" fill="none" stroke="#4b4d5c" stroke-width="2.200"/><path d="M9 9L12.200 12.100" stroke="#4b4d5c" stroke-width="2.500" stroke-linecap="round"/></svg>
<span class="t" style="left:507.90px;top:316.07px;font-size:11.5px;line-height:11.5px;color:#666979;transform:scaleX(1.0006);-webkit-text-stroke:.35px #666979;">AVAILABLE ENDPOINTS</span>
<span class="t" style="left:847.60px;top:315.30px;font-size:13px;line-height:13px;color:#63636d;transform:scaleX(1.0711);">View all</span>
<svg style="left:913px;top:317.5px;" width="10" height="7" viewBox="0 0 10 7"><path d="M1.200 1.200L4.700 4.600 8.200 1.200" fill="none" stroke="#3f3f48" stroke-width="1.900"/></svg>
<svg style="left:501px;top:359px;" width="14" height="9" viewBox="0 0 14 9"><path d="M1.300 1.300L7 7l5.700-5.700" fill="none" stroke="#4a4a53" stroke-width="1.900"/></svg>
<span class="t" style="left:523.60px;top:356.00px;font-size:13px;line-height:13px;color:#63636d;transform:scaleX(1.0355);">Weatherforecast</span>
<div style="left:486px;top:383.2px;width:439.5px;height:30.8px;border:2px solid #4f63d4;border-radius:4px;background:#fff"></div>
<div style="left:523.7px;top:390px;width:17px;height:17px;background:#3f51b5;border-radius:3px"></div>
<svg style="left:526px;top:393px;" width="12" height="11" viewBox="0 0 12 11"><path d="M1.500 5.800L4.600 8.800 10.600 2" fill="none" stroke="#fff" stroke-width="2.100"/></svg>
<div style="left:549.7px;top:390px;width:53px;height:17px;background:#5f70de;border-radius:3px"></div>
<span class="t" style="left:565.90px;top:394.04px;font-size:10px;line-height:10px;color:#fff;font-weight:700;transform:scaleX(0.9697);">GET</span>
<span class="t" style="left:611.10px;top:392.00px;font-size:13px;line-height:13px;color:#63636d;transform:scaleX(1.0230);">/WeatherForecast</span>
<span class="t" style="left:873.10px;top:392.00px;font-size:13px;line-height:13px;color:#74747e;transform:scaleX(0.9686);">(mock)</span>
<div style="left:486px;top:738px;width:124.5px;height:29.5px;border:2px solid #a3a4ab;border-radius:15px"></div>
<span class="t" style="left:505.60px;top:746.30px;font-size:13px;line-height:13px;color:#5a5a64;transform:scaleX(0.8946);-webkit-text-stroke:.3px #5a5a64;">EDIT SOURCES</span>
<div style="left:704.7px;top:738px;width:87.5px;height:29.5px;border:2px solid #a3a4ab;border-radius:15px"></div>
<span class="t" style="left:729.10px;top:746.30px;font-size:13px;line-height:13px;color:#5a5a64;transform:scaleX(0.8725);-webkit-text-stroke:.3px #5a5a64;">CLOSE</span>
<div style="left:810.5px;top:738px;width:115px;height:29.5px;background:#3f4fb5;border-radius:15px"></div>
<span class="t" style="left:827.10px;top:746.30px;font-size:13px;line-height:13px;color:#fff;font-weight:700;transform:scaleX(0.9066);">SELECT DATA</span>
<div style="left:997.5px;top:204px;width:53px;height:17.8px;background:#5f70de;border-radius:3px"></div>
<span class="t" style="left:1013.40px;top:207.84px;font-size:10px;line-height:10px;color:#fff;font-weight:700;transform:scaleX(0.9455);">GET</span>
<span class="t" style="left:1057.90px;top:206.00px;font-size:13px;line-height:13px;color:#63636d;transform:scaleX(1.0279);">/WeatherForecast</span>
<div style="left:1348px;top:197.5px;width:88px;height:30px;border:2px solid #dfdfe3;border-radius:15px"></div>
<span class="t" style="left:1375.10px;top:206.00px;font-size:13px;line-height:13px;color:#a9a9b1;transform:scaleX(0.8858);">SEND</span>
<div style="left:997.5px;top:246.3px;width:438px;height:87.5px;border:1px solid #dcdce1;border-radius:5px;background:#fff"></div>
<div style="left:997.5px;top:246.3px;width:53px;height:87.5px;background:#cd182c;border-radius:5px 0 0 5px"></div>
<svg style="left:1014.5px;top:281px;" width="18" height="18" viewBox="0 0 18 18"><circle cx="9" cy="9" r="7.600" fill="none" stroke="#fff" stroke-width="2.200"/><path d="M5.900 5.900l6.200 6.200M12.100 5.900l-6.200 6.200" stroke="#fff" stroke-width="2.300"/></svg>
<span class="t" style="left:1067.60px;top:264.00px;font-size:13px;line-height:13px;color:#3c3c44;font-weight:700;transform:scaleX(1.0021);">Something went wrong</span>
<span class="t" style="left:1067.60px;top:282.00px;font-size:13px;line-height:13px;color:#6c6c76;transform:scaleX(1.0221);">To send a request, complete any required fields and try</span>
<span class="t" style="left:1067.60px;top:299.00px;font-size:13px;line-height:13px;color:#6c6c76;transform:scaleX(0.9921);">again</span>
<span class="t" style="left:1023.60px;top:354.20px;font-size:13px;line-height:13px;color:#62626c;transform:scaleX(0.9359);-webkit-text-stroke:.3px #62626c;">AUTHORIZATION</span>
<span class="t" style="left:1175.40px;top:354.20px;font-size:13px;line-height:13px;color:#44444c;transform:scaleX(0.9259);-webkit-text-stroke:.3px #44444c;">PARAMS</span>
<span class="t" style="left:1278.90px;top:354.20px;font-size:13px;line-height:13px;color:#62626c;transform:scaleX(0.8986);-webkit-text-stroke:.3px #62626c;">HEADERS</span>
<div style="left:997.5px;top:387px;width:438px;height:2px;background:#dedee2"></div>
<div style="left:1149.3px;top:385px;width:102.7px;height:3.7px;background:#5064d6"></div>
<svg style="left:997px;top:417px;" width="18" height="18" viewBox="0 0 18 18"><circle cx="9" cy="9" r="7.600" fill="none" stroke="#464855" stroke-width="2"/><rect x="8.100" y="7.800" width="1.800" height="5.200" fill="#464855"/><rect x="8.100" y="4.800" width="1.800" height="1.900" fill="#464855"/></svg>
<span class="t" style="left:1023.60px;top:418.80px;font-size:13px;line-height:13px;color:#63636d;transform:scaleX(1.0227);">Params are not required or defined for this endpoint</span>
<svg style="left:0;top:0" width="1920" height="893" viewBox="0 0 1920 893"><path d="M874.5 125.5 L776.3 211.5 L774.3 205.0 L765.5 223.2 L785.0 217.5 L780.3 215.3Z" fill="#fff" fill-opacity=".7" stroke="#e81c24" stroke-width="1.750" stroke-linejoin="miter"/><path d="M941.5 158.0 L973.2 248.3 L967.5 250.7 L982.3 263.3 L984.3 244.5 L978.3 246.5Z" fill="#fff" fill-opacity=".7" stroke="#e81c24" stroke-width="1.750" stroke-linejoin="miter"/></svg>
</body></html>
